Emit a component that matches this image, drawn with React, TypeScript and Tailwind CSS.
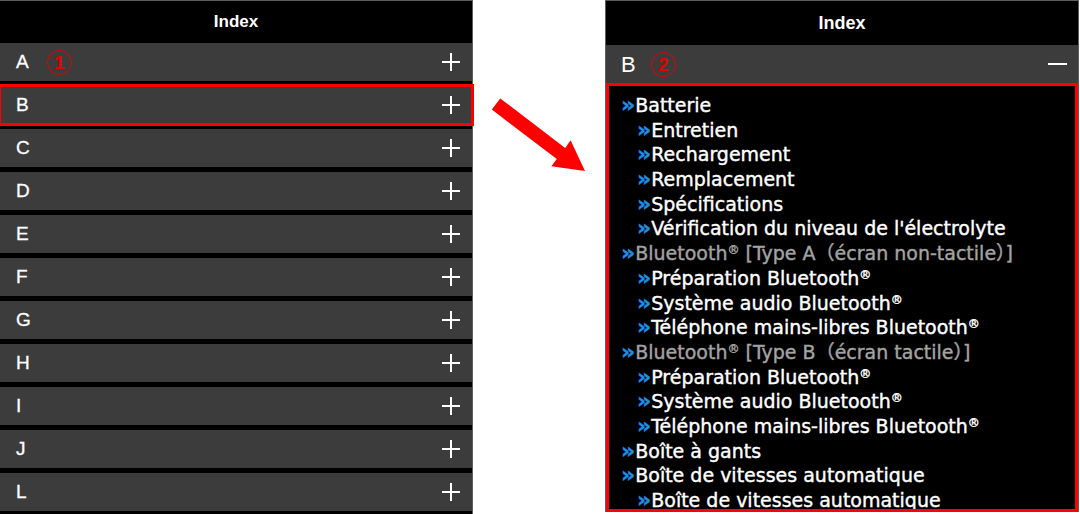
import React from "react";

type Entry = { label: React.ReactNode; sub?: boolean; muted?: boolean };

const letters = ["A", "B", "C", "D", "E", "F", "G", "H", "I", "J", "L"];

const Reg = () => <sup className="text-[12px]">®</sup>;

const entries: Entry[] = [
  { label: "Batterie" },
  { label: "Entretien", sub: true },
  { label: "Rechargement", sub: true },
  { label: "Remplacement", sub: true },
  { label: "Spécifications", sub: true },
  { label: "Vérification du niveau de l'électrolyte", sub: true },
  {
    label: (
      <>
        Bluetooth
        <Reg /> [Type A（écran non-tactile）]
      </>
    ),
    muted: true,
  },
  { label: <>Préparation Bluetooth<Reg /></>, sub: true },
  { label: <>Système audio Bluetooth<Reg /></>, sub: true },
  { label: <>Téléphone mains-libres Bluetooth<Reg /></>, sub: true },
  {
    label: (
      <>
        Bluetooth
        <Reg /> [Type B（écran tactile）]
      </>
    ),
    muted: true,
  },
  { label: <>Préparation Bluetooth<Reg /></>, sub: true },
  { label: <>Système audio Bluetooth<Reg /></>, sub: true },
  { label: <>Téléphone mains-libres Bluetooth<Reg /></>, sub: true },
  { label: "Boîte à gants" },
  { label: "Boîte de vitesses automatique" },
  { label: "Boîte de vitesses automatique", sub: true },
];

const Plus = () => (
  <svg width="18" height="18" viewBox="0 0 18 18" className="shrink-0">
    <path d="M9 0v18M0 9h18" stroke="white" strokeWidth="2" />
  </svg>
);

const Circled: React.FC<{ n: number }> = ({ n }) => (
  <span className="flex h-[25px] w-[25px] items-center justify-center rounded-full border-[1.5px] border-[#e60000] font-['Liberation_Sans',sans-serif] text-[19px] font-bold leading-none text-[#e60000]">
    {n}
  </span>
);

const App: React.FC = () => {
  return (
    <div className="flex h-[514px] w-[1080px] bg-white font-['Liberation_Sans',sans-serif]">
      {/* Closed index */}
      <section className="flex h-[514px] w-[473px] shrink-0 flex-col border-t border-r border-[#5e5e5e] bg-black">
        <header className="flex h-[42px] shrink-0 items-center justify-center text-[17px] font-bold text-white">
          Index
        </header>
        <div className="flex flex-col gap-[5px]">
          {letters.map((l) => (
            <div
              key={l}
              className={`flex h-[38px] shrink-0 items-center justify-between bg-[#3c3c3c] pl-4 pr-[12px] ${
                l === "B" ? "outline-[3px] -outline-offset-1 outline-[#ff0000]" : ""
              }`}
            >
              <div className="flex items-center gap-[18px]">
                <span className="text-[19px] text-white [-webkit-text-stroke-width:0.3px]">{l}</span>
                {l === "A" && <Circled n={1} />}
              </div>
              <Plus />
            </div>
          ))}
        </div>
      </section>

      {/* Arrow */}
      <div className="w-[132px] shrink-0">
        <svg width="132" height="514" viewBox="0 0 132 514">
          <polygon
            points="27.2,98.4 92.2,147.9 97.6,140.2 112,171 78.4,166.3 83.8,159.1 18.8,109.6"
            fill="#ff0000"
          />
        </svg>
      </div>

      {/* Opened B */}
      <section className="flex h-[512px] w-[474px] shrink-0 flex-col border-t border-x border-[#5e5e5e] bg-black">
        <header className="flex h-[44px] shrink-0 items-center justify-center text-[18px] font-bold text-white">
          Index
        </header>
        <div className="flex h-[38px] shrink-0 items-center justify-between bg-[#3c3c3c] pl-[15px] pr-[11px]">
          <div className="flex items-center gap-[15px]">
            <span className="text-[22px] text-white">B</span>
            <Circled n={2} />
          </div>
          <span className="h-[2px] w-[19px] bg-white" />
        </div>
        <div className="min-h-0 flex-1 overflow-hidden border-[3px] border-[#ff0000] pl-[12px] pt-[7px] font-['DejaVu_Sans','Noto_Sans_CJK_JP',sans-serif] text-[19px] leading-[24.7px] [-webkit-text-stroke-width:0.4px]">
          {entries.map((e, i) => (
            <div
              key={i}
              className={`h-[24.7px] whitespace-nowrap ${e.sub ? "pl-4" : ""} ${
                e.muted ? "text-[#a3a3a3]" : "text-white"
              }`}
            >
              <span className="text-[22px] font-bold leading-none text-[#1e8fe6]">»</span>
              {e.label}
            </div>
          ))}
        </div>
      </section>
    </div>
  );
};

export default App;
